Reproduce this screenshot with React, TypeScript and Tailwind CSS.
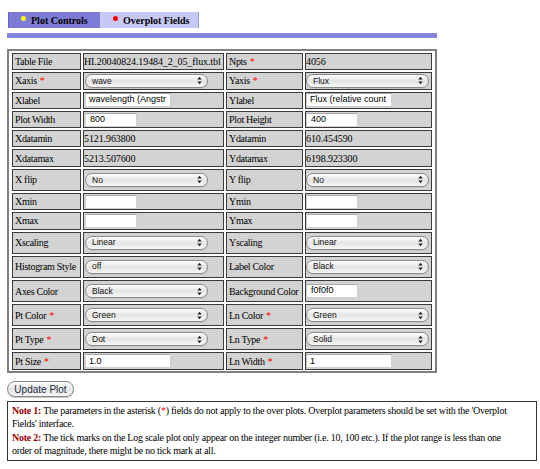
import React from "react";

function Arrows() {
  return (
    <svg width="5" height="9" viewBox="0 0 5 9" className="shrink-0">
      <polygon points="0.3,3.6 2.5,0.8 4.7,3.6" fill="#222" />
      <polygon points="0.3,5.4 2.5,8.2 4.7,5.4" fill="#222" />
    </svg>
  );
}

function L({ children, star }: { children: React.ReactNode; star?: boolean }) {
  return (
    <div className="bg-[#d3d3d3] border border-[#3a3a3a] pl-[2px] flex items-center whitespace-nowrap overflow-hidden text-[10px] tracking-[-0.3px] text-black">
      <span>{children}</span>
      {star && <span className="text-[#ff0000] ml-[3px]">*</span>}
    </div>
  );
}

function T({ children }: { children: React.ReactNode }) {
  return (
    <div className="bg-[#d3d3d3] border border-[#3a3a3a] flex items-center whitespace-nowrap overflow-hidden text-[10px] tracking-[-0.1px] text-black">
      {children}
    </div>
  );
}

function S({ v, first }: { v: string; first?: boolean }) {
  return (
    <div className={first ? "bg-[#d3d3d3] border border-[#3a3a3a] flex items-center pl-[1px]" : "bg-[#d3d3d3] border border-[#3a3a3a] flex items-center"}>
      <div className="w-[123px] h-[14px] rounded-full border border-[#8a8a8a] bg-gradient-to-b from-white via-[#e4e4e4] to-[#f6f6f6] shadow-[0_1px_0_#c4c4c4] flex items-center justify-between pl-[6px] pr-[5px] font-['Liberation_Sans',sans-serif] text-[8.5px] text-[#111]">
        <span>{v}</span>
        <Arrows />
      </div>
    </div>
  );
}

function I({ v, wide, first }: { v: string; wide?: boolean; first?: boolean }) {
  return (
    <div className={first ? "bg-[#d3d3d3] border border-[#3a3a3a] flex items-center pl-[1px]" : "bg-[#d3d3d3] border border-[#3a3a3a] flex items-center"}>
      <div
        className={
          wide
            ? "w-[86px] h-[14px] bg-white border border-[#d0d0d0] border-t-[#a8a8a8] flex items-center pl-[3px] overflow-hidden whitespace-nowrap font-['Liberation_Sans',sans-serif] text-[9px] text-black"
            : "w-[52px] h-[14px] bg-white border border-[#d0d0d0] border-t-[#a8a8a8] flex items-center pl-[4px] overflow-hidden whitespace-nowrap font-['Liberation_Sans',sans-serif] text-[9px] text-black"
        }
      >
        {v}
      </div>
    </div>
  );
}

export default function App() {
  return (
    <div className="w-[540px] h-[469px] bg-white overflow-hidden font-['Liberation_Serif',serif]">
      {/* Tabs */}
      <div className="pt-[12px] pl-[8px] flex">
        <div className="w-[92px] h-[16px] bg-[#7c7cd6] border-l border-[#6565c0] flex items-center pl-[12px] text-[10px] font-bold text-black">
          <span className="w-[5px] h-[5px] rounded-full bg-[#ffff00] mb-[4px] mr-[5px]" />
          <span>Plot Controls</span>
        </div>
        <div className="w-[99px] h-[16px] bg-[#c8c8f6] border-r border-[#9a9ae2] flex items-center pl-[13px] text-[10px] font-bold text-black">
          <span className="w-[5px] h-[5px] rounded-full bg-[#ff0000] mb-[4px] mr-[5px]" />
          <span>Overplot Fields</span>
        </div>
      </div>
      <div className="mt-[5px] ml-[7px] w-[430px] h-[5px] bg-[#8686da]" />

      {/* Table */}
      <div className="mt-[11px] ml-[7px] w-[430px] border-2 border-[#808080] bg-white pt-[2px] pb-[1px] pl-[3px] pr-[3px]">
        <div className="grid grid-cols-[69px_141px_77px_127px] grid-rows-[repeat(6,17.3px)_22.4px_17.2px_17.2px_repeat(5,22.2px)_18px] gap-[2px]">
          <L>Table File</L>
          <T>HI.20040824.19484_2_05_flux.tbl</T>
          <L star>Npts</L>
          <T>4056</T>

          <L star>Xaxis</L>
          <S v="wave" first />
          <L star>Yaxis</L>
          <S v="Flux" />

          <L>Xlabel</L>
          <I v="wavelength (Angstr" wide first />
          <L>Ylabel</L>
          <I v="Flux (relative count" wide />

          <L>Plot Width</L>
          <I v="800" first />
          <L>Plot Height</L>
          <I v="400" />

          <L>Xdatamin</L>
          <T>5121.963800</T>
          <L>Ydatamin</L>
          <T>610.454590</T>

          <L>Xdatamax</L>
          <T>5213.507600</T>
          <L>Ydatamax</L>
          <T>6198.923300</T>

          <L>X flip</L>
          <S v="No" first />
          <L>Y flip</L>
          <S v="No" />

          <L>Xmin</L>
          <I v="" first />
          <L>Ymin</L>
          <I v="" />

          <L>Xmax</L>
          <I v="" first />
          <L>Ymax</L>
          <I v="" />

          <L>Xscaling</L>
          <S v="Linear" first />
          <L>Yscaling</L>
          <S v="Linear" />

          <L>Histogram Style</L>
          <S v="off" first />
          <L>Label Color</L>
          <S v="Black" />

          <L>Axes Color</L>
          <S v="Black" first />
          <L>Background Color</L>
          <I v="f0f0f0" />

          <L star>Pt Color</L>
          <S v="Green" first />
          <L star>Ln Color</L>
          <S v="Green" />

          <L star>Pt Type</L>
          <S v="Dot" first />
          <L star>Ln Type</L>
          <S v="Solid" />

          <L star>Pt Size</L>
          <I v="1.0" wide first />
          <L star>Ln Width</L>
          <I v="1" wide />
        </div>
      </div>

      {/* Button */}
      <div className="mt-[8px] ml-[7px] w-[67px] h-[16px] rounded-full border border-[#8a8a8a] bg-gradient-to-b from-white via-[#e6e6e6] to-[#f6f6f6] shadow-[0_1px_0_#c4c4c4] flex items-center justify-center font-['Liberation_Sans',sans-serif] text-[10px] text-[#222b44]">
        Update Plot
      </div>

      {/* Notes */}
      <div className="mt-[4px] ml-[7px] w-[530px] h-[60px] border border-[#333] pl-[4px] pt-[3px] text-[10px] tracking-[-0.25px] leading-[12.5px] text-black">
        <p className="whitespace-nowrap">
          <span className="font-bold text-[#990000]">Note 1:</span> The parameters in the asterisk (
          <span className="text-[#ff0000]">*</span>) fields do not apply to the over plots. Overplot parameters should be set with the 'Overplot
          <br />
          Fields' interface.
        </p>
        <p className="whitespace-nowrap mt-[2px]">
          <span className="font-bold text-[#990000]">Note 2:</span> The tick marks on the Log scale plot only appear on the integer number (i.e. 10, 100 etc.). If the plot range is less than one
          <br />
          order of magnitude, there might be no tick mark at all.
        </p>
      </div>
    </div>
  );
}
